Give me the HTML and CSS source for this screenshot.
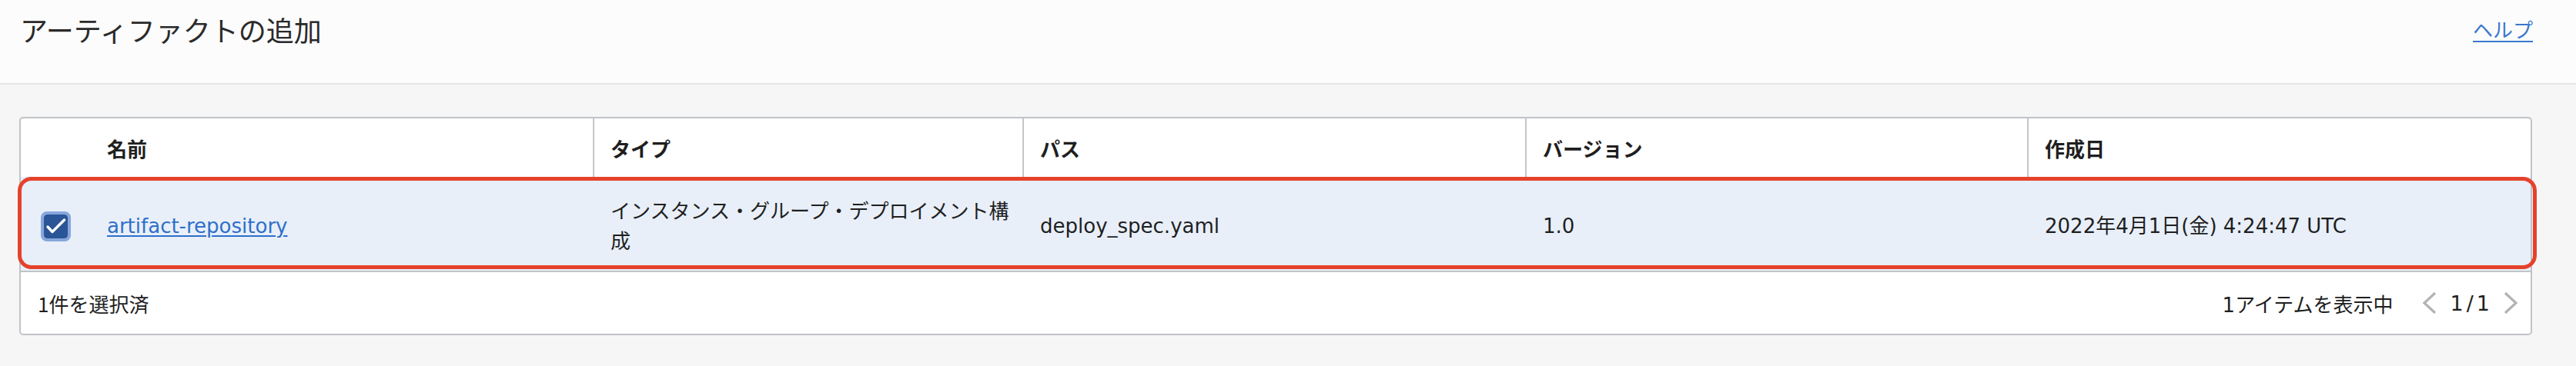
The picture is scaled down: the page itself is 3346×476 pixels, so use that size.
FILE: index.html
```html
<!DOCTYPE html>
<html lang="ja">
<head>
<meta charset="utf-8">
<title>アーティファクトの追加</title>
<link rel="stylesheet" href="styles.css">
</head>
<body>
<header class="topbar">
  <h1 class="title">アーティファクトの追加</h1>
  <a class="help" href="#">ヘルプ</a>
</header>
<main class="page">
  <div class="table">
    <div class="row head">
      <div class="cell check"></div>
      <div class="cell name">名前</div>
      <div class="cell div">タイプ</div>
      <div class="cell div">パス</div>
      <div class="cell div">バージョン</div>
      <div class="cell div">作成日</div>
    </div>
    <div class="row data">
      <div class="cell check">
        <span class="checkbox">
          <svg viewBox="0 0 31 31" width="31" height="31"><polyline points="5,16 11,22.5 26.5,7" fill="none" stroke="#fff" stroke-width="3.4" stroke-linecap="round" stroke-linejoin="round"/></svg>
        </span>
      </div>
      <div class="cell name"><a class="link" href="#">artifact-repository</a></div>
      <div class="cell type">インスタンス・グループ・デプロイメント構成</div>
      <div class="cell">deploy_spec.yaml</div>
      <div class="cell">1.0</div>
      <div class="cell">2022年4月1日(金) 4:24:47 UTC</div>
    </div>
    <div class="foot">
      <span class="selected">1件を選択済</span>
      <div class="pager">
        <span class="count">1アイテムを表示中</span>
        <svg class="chev" viewBox="0 0 20 30" width="20" height="30"><polyline points="17,2 3,15 17,28" fill="none" stroke="#b3b3b3" stroke-width="3.2"/></svg>
        <span class="pages">1/1</span>
        <svg class="chev" viewBox="0 0 20 30" width="20" height="30"><polyline points="3,2 17,15 3,28" fill="none" stroke="#b3b3b3" stroke-width="3.2"/></svg>
      </div>
    </div>
    <div class="highlight"></div>
  </div>
</main>
</body>
</html>
```

FILE: styles.css
```css
html, body {
  margin: 0;
  padding: 0;
}
body {
  background: #f6f6f6;
  font-family: "DejaVu Sans", "Noto Sans CJK JP", sans-serif;
  font-size: 26px;
  color: #1f1f1f;
}
.topbar {
  box-sizing: border-box;
  height: 110px;
  background: #fcfcfc;
  border-bottom: 2px solid #e6e6e6;
  display: flex;
  justify-content: space-between;
  align-items: flex-start;
  padding: 16px 56px 0 26px;
}
.title {
  margin: 0;
  font-family: "Noto Sans CJK JP", sans-serif;
  font-weight: 400;
  font-size: 36px;
  line-height: 44px;
  color: #2a2a2a;
}
.help {
  font-family: "Noto Sans CJK JP", sans-serif;
  font-size: 26px;
  line-height: 44px;
  color: #3a77cc;
  text-decoration: underline;
  text-underline-offset: 4px;
}
.page {
  padding: 42px 57px 40px 25px;
}
.table {
  position: relative;
  background: #fff;
  border: 2px solid #c0c3c7;
  border-radius: 5px;
}
.row {
  display: grid;
  grid-template-columns: 91px 652px 558px 653px 652px 1fr;
}
.head {
  height: 76px;
}
.head .cell {
  font-weight: 700;
  font-family: "Noto Sans CJK JP", sans-serif;
}
.cell {
  display: flex;
  align-items: center;
  padding-left: 21px;
  line-height: 39px;
}
.cell.div {
  border-left: 2px solid #c3c6ca;
}
.cell.check {
  padding-left: 26px;
}
.data {
  height: 122px;
  background: #e8eff9;
  border-bottom: 2px solid #c0c3c7;
  box-sizing: content-box;
}
.data .cell {
  padding-top: 7px;
}
.data .cell:nth-child(n+3) {
  padding-left: 23px;
}
.cell.type {
  padding-right: 12px;
}
.checkbox {
  display: flex;
  align-items: center;
  justify-content: center;
  width: 31px;
  height: 31px;
  border: 4px solid #86a6dc;
  border-radius: 8px;
  background: #2a5597;
  background-clip: padding-box;
}
.link {
  color: #2f6fca;
  text-decoration: underline;
  text-underline-offset: 3px;
}
.foot {
  height: 80px;
  display: flex;
  align-items: center;
  justify-content: space-between;
  padding: 0 16px 0 22px;
}
.selected {
  font-family: "Noto Sans CJK JP", sans-serif;
}
.pager {
  display: flex;
  align-items: center;
}
.count {
  margin-right: 37px;
}
.pages {
  margin: 0 13px 0 17px;
  letter-spacing: 4px;
  font-size: 27px;
}
.highlight {
  position: absolute;
  left: -4px;
  top: 76px;
  width: 3272px;
  height: 120px;
  box-sizing: border-box;
  border: 5px solid #e5422c;
  border-radius: 18px;
  pointer-events: none;
}
```
